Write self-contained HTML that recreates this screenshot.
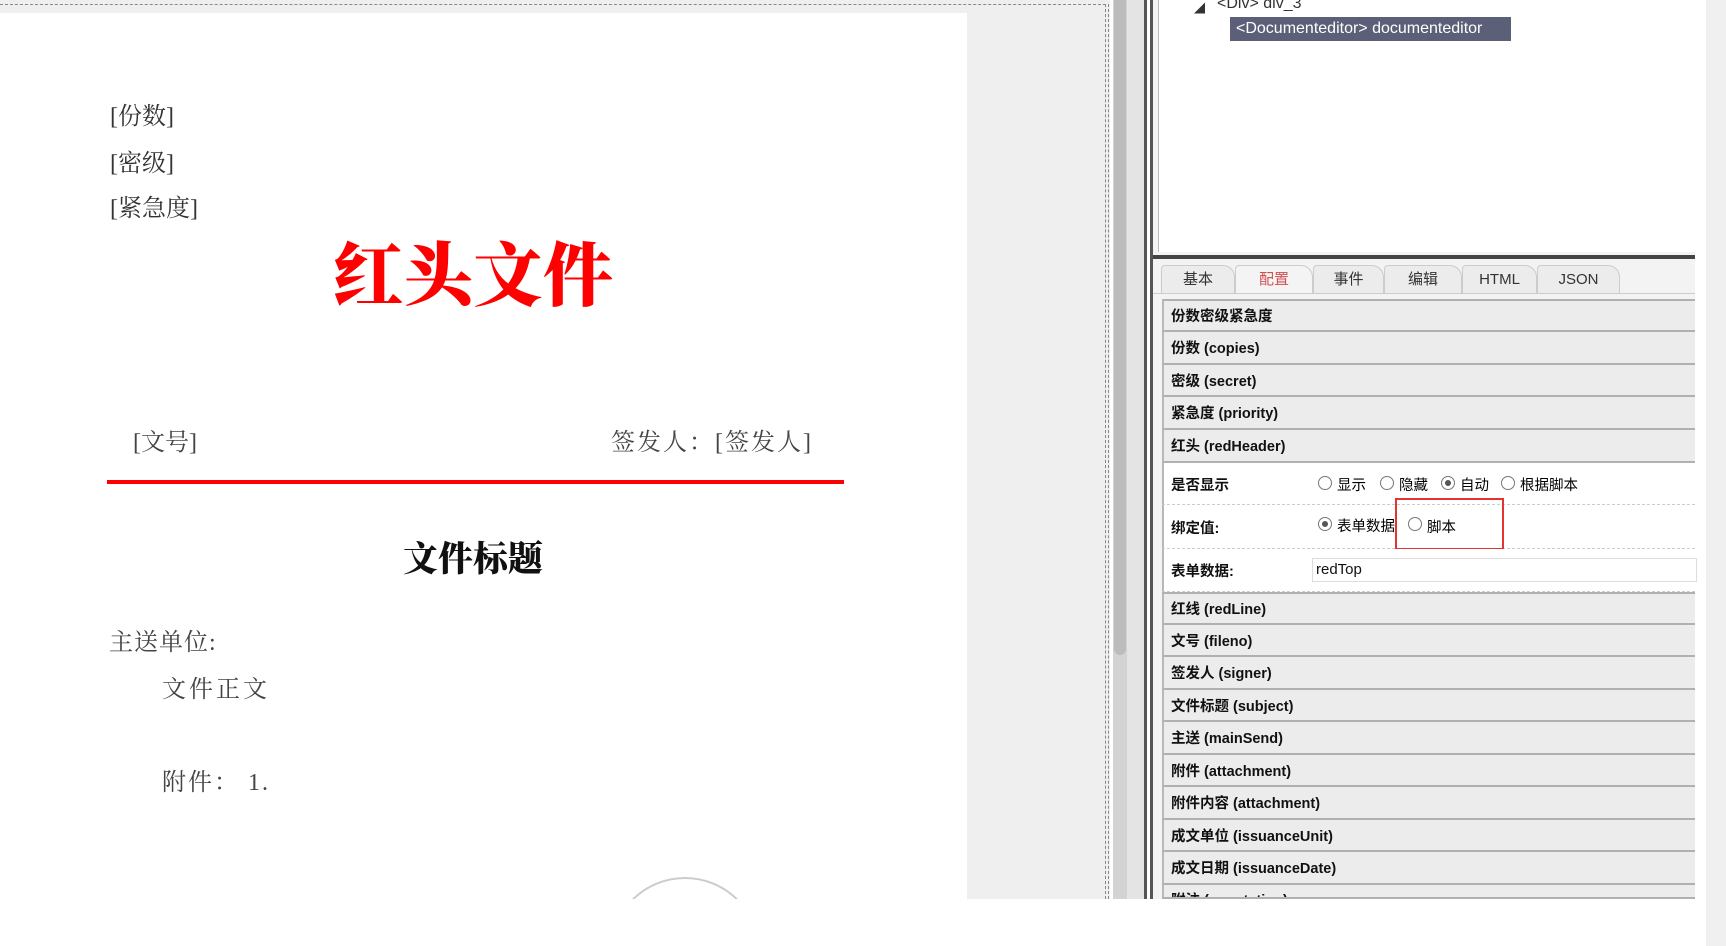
<!DOCTYPE html>
<html><head><meta charset="utf-8"><style>
*{margin:0;padding:0;box-sizing:border-box}
html,body{width:1726px;height:946px;overflow:hidden}
body{background:#fff;position:relative;font-family:"Liberation Sans","Noto Sans CJK SC",sans-serif}
.abs{position:absolute}
.serif{font-family:"Liberation Serif","Noto Serif CJK SC",serif}
.row{position:absolute;left:1162px;width:533px;background:#ececec;border-left:2px solid #b8b8b8;border-bottom:2px solid #b0b0b0;font-weight:bold;font-size:14.5px;color:#111;padding-left:7px;display:flex;align-items:center}
.prow{position:absolute;left:1162px;width:533px;background:#fff;border-left:2px solid #b8b8b8;border-bottom:1px dashed #ccc;font-size:14.5px;color:#111}
.radio{position:absolute;width:14px;height:14px;border:1px solid #777;border-radius:50%;background:#fff}
.radio.on::after{content:"";position:absolute;left:3px;top:3px;width:6px;height:6px;border-radius:50%;background:#555}
.tab{position:absolute;top:265px;height:28px;border:1px solid #ccc;border-bottom:none;border-radius:4px 12px 0 0;background:#ececec;font-size:15px;color:#333;text-align:center;line-height:27px}
</style></head><body>
<div class="abs" style="left:0;top:0;width:1110px;height:899px;background:#efefef"></div>
<div class="abs" style="left:0;top:4px;width:1106px;border-top:1px dashed #888"></div>
<div class="abs" style="left:1105px;top:4px;height:895px;border-left:1px dashed #888"></div>
<div class="abs" style="left:1108px;top:4px;height:895px;border-left:1px dashed #888"></div>
<div class="abs" style="left:0;top:13px;width:967px;height:886px;background:#fff"></div>
<div class="abs serif" style="left:110px;top:102px;font-size:24px;color:#333;line-height:30px">[份数]</div>
<div class="abs serif" style="left:110px;top:149px;font-size:24px;color:#333;line-height:30px">[密级]</div>
<div class="abs serif" style="left:110px;top:194px;font-size:24px;color:#333;line-height:30px">[紧急度]</div>
<div class="abs" style="left:333px;top:229px;font-size:70px;font-weight:900;color:#f00;line-height:84px;font-family:'Noto Serif CJK SC',serif">红头文件</div>
<div class="abs serif" style="left:133px;top:428px;font-size:24px;color:#444;line-height:30px">[文号]</div>
<div class="abs serif" style="left:611px;top:428px;font-size:24px;color:#444;line-height:30px;letter-spacing:2px">签发人：[签发人]</div>
<div class="abs" style="left:107px;top:480px;width:737px;height:4px;background:#f00"></div>
<div class="abs" style="left:403px;top:535px;font-size:35px;font-weight:900;color:#111;line-height:44px;font-family:'Noto Serif CJK SC',serif">文件标题</div>
<div class="abs serif" style="left:109px;top:628px;font-size:24px;color:#444;line-height:30px;letter-spacing:1px">主送单位:</div>
<div class="abs serif" style="left:162px;top:675px;font-size:24px;color:#444;line-height:30px;letter-spacing:3px">文件正文</div>
<div class="abs serif" style="left:162px;top:768px;font-size:24px;color:#444;line-height:30px;letter-spacing:2px">附件：&nbsp;1.</div>
<div class="abs" style="left:600px;top:876px;width:170px;height:23px;overflow:hidden">
 <div class="abs" style="left:10px;top:1px;width:150px;height:150px;border:2px solid #ccc;border-radius:50%"></div>
</div>
<div class="abs" style="left:1113px;top:0;width:14px;height:899px;background:#d3d3d3"></div>
<div class="abs" style="left:1114px;top:0;width:12px;height:655px;background:#bcbcbc;border-radius:0 0 6px 6px"></div>
<div class="abs" style="left:1127px;top:0;width:18px;height:899px;background:#e4e4e4"></div>
<div class="abs" style="left:1144px;top:0;width:3px;height:899px;background:#555"></div>
<div class="abs" style="left:1150px;top:0;width:3px;height:899px;background:#555"></div>
<div class="abs" style="left:1153px;top:0;width:542px;height:899px;background:#f3f3f3"></div>
<div class="abs" style="left:1158px;top:0;width:537px;height:252px;background:#fff;border-left:1px solid #bbb"></div>
<div class="abs" style="left:1194px;top:0;font-size:11px;color:#333">◢</div>
<div class="abs" style="left:1217px;top:-5px;font-size:16px;color:#333">&lt;Div&gt; div_3</div>
<div class="abs" style="left:1230px;top:17px;width:281px;height:24px;background:#5b5f78;color:#fff;font-size:16px;line-height:24px;padding-left:6px">&lt;Documenteditor&gt; documenteditor</div>
<div class="abs" style="left:1153px;top:255px;width:542px;height:4px;background:#444"></div>
<div class="tab" style="left:1161px;width:74px">基本</div>
<div class="tab" style="left:1235px;width:78px;color:#d05050;background:#f4f4f4">配置</div>
<div class="tab" style="left:1313px;width:71px">事件</div>
<div class="tab" style="left:1384px;width:78px">编辑</div>
<div class="tab" style="left:1462px;width:75px">HTML</div>
<div class="tab" style="left:1537px;width:83px">JSON</div>
<div class="abs" style="left:1153px;top:293px;width:542px;height:1px;background:#ccc"></div>
<div class="row" style="top:299px;height:33px;border-top:2px solid #b0b0b0">份数密级紧急度</div>
<div class="row" style="top:332px;height:33px">份数 (copies)</div>
<div class="row" style="top:365px;height:32px">密级 (secret)</div>
<div class="row" style="top:397px;height:33px">紧急度 (priority)</div>
<div class="row" style="top:430px;height:33px">红头 (redHeader)</div>
<div class="prow" style="top:463px;height:42px"><span class="abs" style="left:7px;top:11px;font-weight:bold">是否显示</span></div>
<div class="radio" style="left:1318px;top:476px"></div><span class="abs" style="left:1337px;top:474px;font-size:14.5px">显示</span>
<div class="radio" style="left:1380px;top:476px"></div><span class="abs" style="left:1399px;top:474px;font-size:14.5px">隐藏</span>
<div class="radio on" style="left:1441px;top:476px"></div><span class="abs" style="left:1460px;top:474px;font-size:14.5px">自动</span>
<div class="radio" style="left:1501px;top:476px"></div><span class="abs" style="left:1520px;top:474px;font-size:14.5px">根据脚本</span>
<div class="prow" style="top:505px;height:44px"><span class="abs" style="left:7px;top:12px;font-weight:bold">绑定值:</span></div>
<div class="radio on" style="left:1318px;top:517px"></div><span class="abs" style="left:1337px;top:515px;font-size:14.5px;width:58px;overflow:hidden;white-space:nowrap">表单数据</span>
<div class="radio" style="left:1408px;top:517px"></div><span class="abs" style="left:1427px;top:516px;font-size:14.5px">脚本</span>
<div class="abs" style="left:1395px;top:498px;width:109px;height:52px;border:2px solid #e53333"></div>
<div class="prow" style="top:549px;height:43px"><span class="abs" style="left:7px;top:11px;font-weight:bold">表单数据:</span>
 <div class="abs" style="left:148px;top:9px;width:385px;height:24px;border:1px solid #ddd;background:#fff;font-size:15px;padding-left:3px;line-height:22px">redTop</div></div>
<div class="row" style="top:592px;height:33px;border-top:2px solid #b0b0b0">红线 (redLine)</div>
<div class="row" style="top:625px;height:32px">文号 (fileno)</div>
<div class="row" style="top:657px;height:33px">签发人 (signer)</div>
<div class="row" style="top:690px;height:32px">文件标题 (subject)</div>
<div class="row" style="top:722px;height:33px">主送 (mainSend)</div>
<div class="row" style="top:755px;height:32px">附件 (attachment)</div>
<div class="row" style="top:787px;height:33px">附件内容 (attachment)</div>
<div class="row" style="top:820px;height:32px">成文单位 (issuanceUnit)</div>
<div class="row" style="top:852px;height:33px">成文日期 (issuanceDate)</div>
<div class="row" style="top:885px;height:14px;align-items:flex-start;padding-top:4px;overflow:hidden">附注 (annotation)</div>
<div class="abs" style="left:0;top:899px;width:1726px;height:47px;background:#fff"></div>
<div class="abs" style="left:1706px;top:0;width:20px;height:946px;background:#f0f0f0"></div>
</body></html>
